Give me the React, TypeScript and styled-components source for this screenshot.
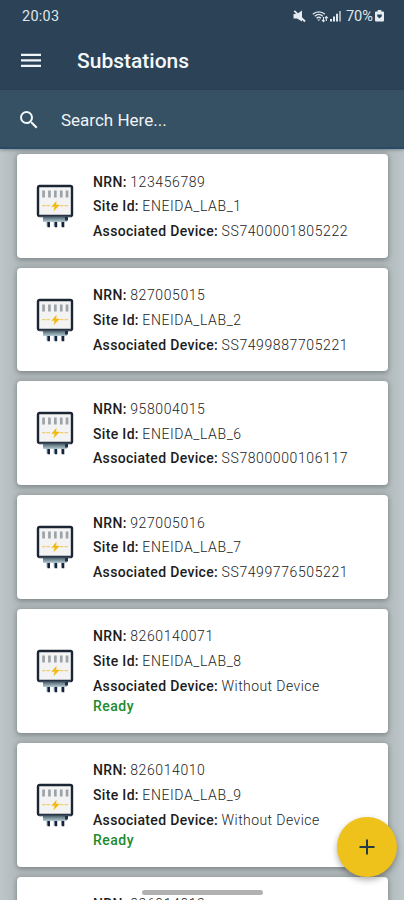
import React from "react";
import styled, { createGlobalStyle } from "styled-components";

const GlobalStyle = createGlobalStyle`
  *, *::before, *::after { box-sizing: border-box; }
  html, body { margin: 0; padding: 0; }
  body { font-family: Roboto, "Liberation Sans", sans-serif; overflow: hidden; }
`;

const Screen = styled.div`
  position: relative;
  width: 404px;
  height: 900px;
  display: flex;
  flex-direction: column;
  overflow: hidden;
  background: linear-gradient(90deg, #bdc6c9 0, #afb7b9 20px, #afb7b9 384px, #bdc6c9 404px);
`;

const TopArea = styled.header`
  flex: none;
  height: 90px;
  background: #2c4257;
  color: #f4f8fb;
`;

const StatusBar = styled.div`
  height: 32px;
  padding: 0 20px 0 22px;
  display: flex;
  align-items: center;
  justify-content: space-between;
  color: #dfe7ec;
`;

const Clock = styled.span`
  font-size: 14.4px;
  letter-spacing: 0.3px;
`;

const StatusIcons = styled.div`
  display: flex;
  align-items: center;
  svg { display: block; }
`;

const Signals = styled.div`
  display: flex;
  align-items: center;
  gap: 1px;
  margin-left: 6px;
`;

const BatteryText = styled.span`
  margin: 0 2px 0 5px;
  font-size: 14.6px;
`;

const TitleBar = styled.div`
  height: 58px;
  padding-left: 21px;
  display: flex;
  align-items: center;
  gap: 36px;
  svg { display: block; }
`;

const Title = styled.h1`
  margin: 0;
  font-size: 21px;
  font-weight: 500;
`;

const SearchBar = styled.div`
  position: relative;
  z-index: 1;
  flex: none;
  height: 59px;
  padding: 2px 0 0 17px;
  display: flex;
  align-items: center;
  gap: 20px;
  background: #365064;
  border-bottom: 2px solid #2b4a66;
  color: #eef4f7;
  box-shadow: 0 1px 3px rgba(30, 50, 65, 0.4);
  svg { display: block; }
`;

const SearchText = styled.span`
  font-size: 17px;
`;

const List = styled.main`
  flex: 1;
  min-height: 0;
  padding: 5px 16px 0 17px;
  display: flex;
  flex-direction: column;
  gap: 10px;
`;

const CardBox = styled.article<{ $tall: boolean }>`
  flex: none;
  height: ${(p) => (p.$tall ? 123.9 : 103.7)}px;
  padding-left: 19px;
  display: flex;
  align-items: center;
  gap: 18px;
  border-radius: 4px;
  background: #fff;
  box-shadow: 0 2px 5px rgba(70, 78, 82, 0.36), 0 0 4px rgba(70, 78, 82, 0.22);
  svg { display: block; flex: none; }
`;

const Details = styled.div`
  align-self: flex-start;
  padding-top: 15.6px;
`;

const Row = styled.div`
  height: 24.7px;
  line-height: 24.7px;
  font-size: 14px;
  white-space: nowrap;
  color: #1c1c1c;
`;

const Label = styled.span`
  font-weight: 500;
  letter-spacing: 0.33px;
`;

const Value = styled.span<{ $words?: boolean }>`
  font-weight: 300;
  letter-spacing: ${(p) => (p.$words ? 0.43 : 0.6)}px;
`;

const Ready = styled.div`
  margin-top: -2px;
  line-height: 20px;
  font-size: 14px;
  font-weight: 500;
  letter-spacing: 0.5px;
  color: #218a2c;
`;

const AddButton = styled.button`
  position: absolute;
  left: 337px;
  top: 817px;
  width: 60px;
  height: 60px;
  padding: 0;
  border: 0;
  border-radius: 50%;
  display: grid;
  place-items: center;
  background: #eec11b;
  box-shadow: 0 3px 6px rgba(0, 0, 0, 0.32);
`;

const HomeHandle = styled.div`
  position: absolute;
  left: 142px;
  top: 890px;
  width: 121px;
  height: 5px;
  border-radius: 3px;
  background: #b1b1b1;
`;

const MutedIcon = () => (
  <svg width="13" height="13" viewBox="0 0 13 13" fill="#e5ecf0">
    <path d="M.5 4h3.500l5-3.500v11L4 8.500H.5z" />
    <path d="M1.300.8 12 11.500" stroke="#e5ecf0" strokeWidth="1.800" />
  </svg>
);

const WifiIcon = () => (
  <svg width="17" height="13" viewBox="0 0 17 13" fill="none" stroke="#dfe7ec" strokeWidth="1.3">
    <path d="M.8 4.2C4 1 9.600 1 12.800 4.200M2.700 6.300c2.400-2.200 5.700-2.200 8.100 0M4.600 8.300c1.300-1.200 3.100-1.200 4.400 0" />
    <path d="M5.300 9.400h3l-1.500 1.700z" fill="#dfe7ec" stroke="none" />
    <path d="M11.500 7v4.500m-1.600-1.600 1.600 1.700 1.100-1.200M14.300 11V6.700m-1.400 1.400 1.400-1.500 1.500 1.500" strokeWidth="1.1" />
  </svg>
);

const SignalIcon = () => (
  <svg width="11" height="12" viewBox="0 0 11 12" fill="#dfe7ec">
    <path d="M0 9h2v2.500H0zM3 6.500h2v5H3zM6 3.800h2v7.700H6z" />
    <path d="M9 1h2v10.500H9z" opacity=".65" />
  </svg>
);

const BatteryIcon = () => (
  <svg width="9" height="12" viewBox="0 0 9 12">
    <path d="M2.700 0h3.600v1.500H8q1 0 1 1v8q0 1-1 1H1q-1 0-1-1v-8q0-1 1-1h1.700z" fill="#e5ecf0" />
    <path d="M2.200 4.600h4.600v1.600L4.500 8.500 2.200 6.200z" fill="#2c4257" />
  </svg>
);

const MenuIcon = () => (
  <svg width="20" height="16" viewBox="0 0 20 16" fill="#eff4f7">
    <path d="M0 .7h20v2.400H0zM0 6.200h20v2.400H0zM0 11.700h20v2.400H0z" />
  </svg>
);

const SearchIcon = () => (
  <svg width="24" height="24" viewBox="0 0 24 24" fill="#f1f6f8">
    <path d="M15.500 14h-.79l-.28-.27A6.470 6.470 0 0 0 16 9.500 6.500 6.500 0 1 0 9.500 16c1.610 0 3.090-.59 4.230-1.570l.27.28v.79l5 4.990L20.490 19zm-6 0a4.500 4.500 0 1 1 0-9 4.500 4.500 0 0 1 0 9z" />
  </svg>
);

const SubstationIcon = () => (
  <svg width="39" height="44" viewBox="0 0 39 44">
    <path d="M7 32h25v4H7z" fill="#71868f" />
    <path d="M7 35.500h24v2.200H7z" fill="#96aeb7" />
    <path d="M29 32h3v4.500h-3z" fill="#243144" />
    <path d="M10.500 37.500h3v5h-3zM17.700 37.500h3v5h-3zM25 37.500h3v5h-3z" fill="#8db0c4" />
    <path d="M11.500 38h2.500v5.300h-2.500zM18.700 38h2.500v5.300h-2.500zM25.800 38h2.500v5.300h-2.500z" fill="#182238" />
    <rect x="2" y="2" width="34" height="30" rx="1.600" fill="#f3f3f3" stroke="#1c2533" strokeWidth="2.400" />
    <path d="M3 32.300h32" stroke="#3d4f60" strokeWidth="1.300" />
    <path d="M6.200 6.500h2.700v7H6.200zM12.100 6.500h2.700v7h-2.700zM18 6.500h2.700v7H18zM23.900 6.500h2.700v7h-2.700zM29.700 6.500h2.700v7h-2.700z" fill="#9da4a8" />
    <path d="M6 21.700h9m9 0h9" stroke="#efcd75" strokeWidth="1.200" strokeDasharray="3.500 1" />
    <path d="M20.200 17.500 15.800 22.600h3L18 26.500l5.400-5.400h-3.500z" fill="#f1b90c" stroke="#f1b90c" strokeWidth=".5" />
  </svg>
);

const PlusIcon = () => (
  <svg width="16" height="16" viewBox="0 0 16 16" stroke="#243c43" strokeWidth="2">
    <path d="M8 .5v15M.5 8h15" />
  </svg>
);

interface Substation {
  nrn: string;
  site?: string;
  device?: string;
}

const substations: Substation[] = [
  { nrn: "123456789", site: "ENEIDA_LAB_1", device: "SS7400001805222" },
  { nrn: "827005015", site: "ENEIDA_LAB_2", device: "SS7499887705221" },
  { nrn: "958004015", site: "ENEIDA_LAB_6", device: "SS7800000106117" },
  { nrn: "927005016", site: "ENEIDA_LAB_7", device: "SS7499776505221" },
  { nrn: "8260140071", site: "ENEIDA_LAB_8" },
  { nrn: "826014010", site: "ENEIDA_LAB_9" },
  { nrn: "826014012" },
];

const SubstationCard = ({ nrn, site, device }: Substation) => (
  <CardBox $tall={!device}>
    <SubstationIcon />
    <Details>
      <Row><Label>NRN:</Label> <Value>{nrn}</Value></Row>
      {site && (
        <>
          <Row><Label>Site Id:</Label> <Value>{site}</Value></Row>
          <Row><Label>Associated Device:</Label> <Value $words={!device}>{device ?? "Without Device"}</Value></Row>
          {!device && <Ready>Ready</Ready>}
        </>
      )}
    </Details>
  </CardBox>
);

export default function App() {
  return (
    <>
      <GlobalStyle />
      <Screen>
        <TopArea>
          <StatusBar>
            <Clock>20:03</Clock>
            <StatusIcons>
              <MutedIcon />
              <Signals>
                <WifiIcon />
                <SignalIcon />
              </Signals>
              <BatteryText>70%</BatteryText>
              <BatteryIcon />
            </StatusIcons>
          </StatusBar>
          <TitleBar>
            <MenuIcon />
            <Title>Substations</Title>
          </TitleBar>
        </TopArea>
        <SearchBar>
          <SearchIcon />
          <SearchText>Search Here...</SearchText>
        </SearchBar>
        <List>
          {substations.map((s) => <SubstationCard key={s.nrn} {...s} />)}
        </List>
        <AddButton aria-label="Add substation"><PlusIcon /></AddButton>
        <HomeHandle />
      </Screen>
    </>
  );
}
